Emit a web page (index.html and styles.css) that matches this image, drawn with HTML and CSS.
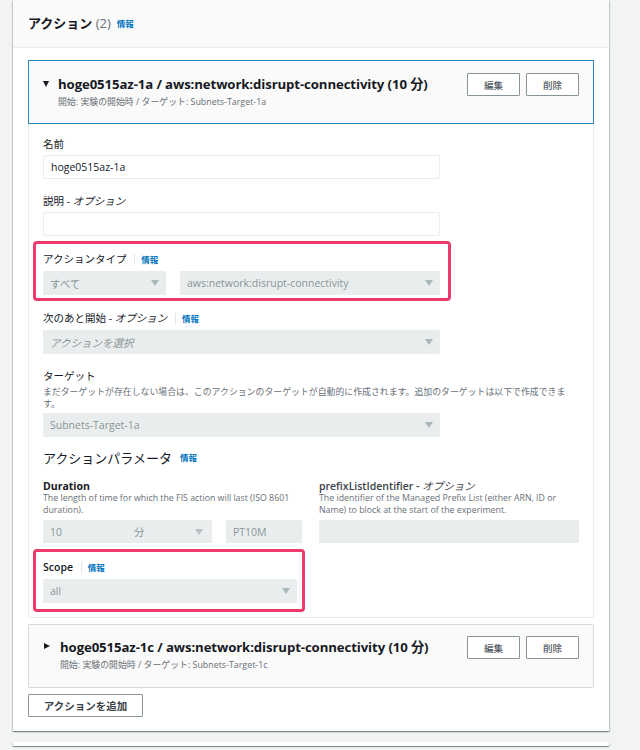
FILE: index.html
```html
<!DOCTYPE html>
<html lang="ja">
<head>
  <meta charset="UTF-8">
  <meta name="viewport" content="width=device-width, initial-scale=1.0">
  <title>アクション · FIS</title>
  <link rel="stylesheet" href="styles.css">
</head>
<body>
  <div class="panel">
    <div class="panel-head">
      <h2>アクション <span class="count">(2)</span></h2>
      <a class="info" href="#">情報</a>
    </div>

    <div class="panel-body">
      <!-- Action 1 (expanded) -->
      <div class="action open">
        <div class="action-head">
          <span class="tri down"></span>
          <div class="action-title">
            <h3>hoge0515az-1a / aws:network:disrupt-connectivity (10 分)</h3>
            <p>開始: 実験の開始時 / ターゲット: Subnets-Target-1a</p>
          </div>
          <div class="btns">
            <button class="btn">編集</button>
            <button class="btn">削除</button>
          </div>
        </div>

        <div class="action-body">
          <div class="field">
            <label>名前</label>
            <div class="input">hoge0515az-1a</div>
          </div>

          <div class="field">
            <label>説明 - <i>オプション</i></label>
            <div class="input"></div>
          </div>

          <div class="hl hl-type">
            <label>アクションタイプ <a class="info sep" href="#">情報</a></label>
            <div class="row">
              <div class="select w-cat">すべて<span class="caret"></span></div>
              <div class="select w-type">aws:network:disrupt-connectivity<span class="caret"></span></div>
            </div>
          </div>

          <div class="field after-hl">
            <label>次のあと開始 - <i>オプション</i> <a class="info sep" href="#">情報</a></label>
            <div class="select placeholder">アクションを選択<span class="caret"></span></div>
          </div>

          <div class="field wide">
            <label>ターゲット</label>
            <p class="desc">まだターゲットが存在しない場合は、このアクションのターゲットが自動的に作成されます。追加のターゲットは以下で作成できます。</p>
            <div class="select">Subnets-Target-1a<span class="caret"></span></div>
          </div>

          <h4 class="params-title">アクションパラメータ <a class="info" href="#">情報</a></h4>

          <div class="params">
            <div class="param">
              <label>Duration</label>
              <p class="desc">The length of time for which the FIS action will last (ISO 8601 duration).</p>
              <div class="row">
                <div class="duration">
                  <span class="num">10</span>
                  <span class="unit">分</span>
                  <span class="caret"></span>
                </div>
                <div class="select iso">PT10M</div>
              </div>
            </div>
            <div class="param">
              <label>prefixListIdentifier - <i>オプション</i></label>
              <p class="desc">The identifier of the Managed Prefix List (either ARN, ID or Name) to block at the start of the experiment.</p>
              <div class="select"></div>
            </div>
          </div>

          <div class="hl hl-scope">
            <label class="strong">Scope <a class="info sep" href="#">情報</a></label>
            <div class="select">all<span class="caret"></span></div>
          </div>
        </div>
      </div>

      <!-- Action 2 (collapsed) -->
      <div class="action">
        <div class="action-head">
          <span class="tri right"></span>
          <div class="action-title">
            <h3>hoge0515az-1c / aws:network:disrupt-connectivity (10 分)</h3>
            <p>開始: 実験の開始時 / ターゲット: Subnets-Target-1c</p>
          </div>
          <div class="btns">
            <button class="btn">編集</button>
            <button class="btn">削除</button>
          </div>
        </div>
      </div>

      <button class="btn add">アクションを追加</button>
    </div>
  </div>

  <div class="panel next"></div>
</body>
</html>
```

FILE: styles.css
```css
:root {
  --bg: #f2f3f3;
  --panel: #ffffff;
  --head: #fafafa;
  --text: #16191f;
  --muted: #687078;
  --disabled: #eaeded;
  --disabled-text: #879596;
  --link: #0073bb;
  --line: #d5dbdb;
  --pink: #ec3a6d;
}
* { margin: 0; padding: 0; box-sizing: border-box; }
body {
  background: var(--bg);
  color: var(--text);
  font-family: "Open Sans", "Noto Sans CJK JP", sans-serif;
  padding-left: 13px;
  width: 640px;
  height: 750px;
  overflow: hidden;
}
i { font-style: italic; font-weight: 400; }

/* ===== Panel ===== */
.panel {
  width: 596px;
  background: var(--panel);
  box-shadow: 0 1px 1px 0 rgba(0,28,36,0.3), 1px 1px 1px 0 rgba(0,28,36,0.15), -1px 1px 1px 0 rgba(0,28,36,0.15);
}
.panel.next { margin-top: 11px; height: 4px; }
.panel-head {
  height: 48px;
  background: var(--head);
  border-bottom: 1px solid #eaeded;
  display: flex;
  align-items: center;
  padding: 0 15px 2px;
  gap: 6px;
}
.panel-head h2 { font-size: 13px; font-weight: 700; line-height: 20px; }
.panel-head .count { font-weight: 400; color: var(--muted); }
.panel-body {
  padding: 12px 15px 14px;
  display: flex;
  flex-direction: column;
  gap: 6px;
}

.info {
  color: var(--link);
  font-size: 8.5px;
  font-weight: 700;
  text-decoration: none;
  font-style: normal;
}
.info.sep {
  margin-left: 5px;
  padding-left: 6px;
  border-left: 1px solid #e3e6e6;
}

/* ===== Action card ===== */
.action {
  background: var(--head);
  border: 1px solid var(--line);
  border-radius: 1px;
}
.action.open { background: none; border: none; }
.action.open .action-head { border: 1px solid #2c84bd; background: var(--head); }
.action-head {
  height: 64px;
  display: flex;
  align-items: flex-start;
  padding: 13px 14px 0 14px;
}
.action:not(.open) .action-head { height: 62px; padding-top: 12px; }
.tri {
  width: 0; height: 0;
  margin-top: 7px;
  margin-right: 9px;
  flex-shrink: 0;
}
.tri.down {
  border-left: 3.5px solid transparent;
  border-right: 3.5px solid transparent;
  border-top: 6px solid var(--text);
}
.tri.right {
  margin-top: 6px;
  margin-left: 1px;
  margin-right: 10px;
  border-top: 3.5px solid transparent;
  border-bottom: 3.5px solid transparent;
  border-left: 6px solid var(--text);
}
.action-title { flex: 1; }
.action-title h3 { font-size: 13.2px; font-weight: 700; line-height: 20px; letter-spacing: -0.1px; }
.action-title p { font-size: 8.9px; color: var(--muted); line-height: 12px; margin-top: 2px; }
.btns { display: flex; gap: 6px; margin-top: -1px; }
.btn {
  height: 23px;
  width: 53px;
  background: #fff;
  border: 1px solid #879596;
  border-radius: 1px;
  color: #545b64;
  font-family: inherit;
  font-size: 9.5px;
  font-weight: 500;
}
.btn.add { width: 115px; align-self: flex-start; font-size: 10.5px; font-weight: 700; color: #3b4148; }

.action-body {
  background: #fff;
  border: 1px solid #eaeded;
  border-top: none;
  padding: 12px 14px 5px 14px;
}

/* ===== Form fields ===== */
label {
  display: block;
  font-size: 10.5px;
  line-height: 16px;
  margin-bottom: 3px;
  color: var(--text);
}
label.strong { font-weight: 600; }
.field { width: 397px; margin-bottom: 14px; }
.field.wide { width: 530px; }
.field.wide .select { width: 397px; }
.field + .hl { margin-top: -9px; }
.after-hl { margin-top: 9px; }
.input, .select {
  height: 24px;
  display: flex;
  align-items: center;
  padding: 0 7px;
  font-size: 10.5px;
  position: relative;
}
.input {
  background: #fff;
  border: 1px solid #eaeded;
  border-radius: 2px;
}
.select {
  background: var(--disabled);
  color: var(--disabled-text);
  border-radius: 1px;
}
.select.placeholder { font-style: italic; }
.caret {
  margin-left: auto;
  width: 0; height: 0;
  border-left: 4px solid transparent;
  border-right: 4px solid transparent;
  border-top: 6px solid #aab7b8;
}
.desc {
  font-size: 8.9px;
  line-height: 12px;
  color: var(--muted);
  margin-top: -1px;
  margin-bottom: 3px;
}
.row { display: flex; gap: 14px; }

/* highlighted boxes */
.hl {
  border: 3px solid var(--pink);
  border-radius: 4px;
  margin-left: -10px;
  padding: 7px 8px 3px 7px;
}
.hl-type { width: 418px; }
.w-cat { width: 123px; }
.w-type { flex: 1; }
.hl-scope {
  width: 272px;
  margin-top: 6px;
  padding: 7px 5px 6px 7px;
}

/* params */
.params-title {
  font-size: 13px;
  font-weight: 400;
  line-height: 20px;
  margin-top: -3px;
  margin-bottom: 10px;
  display: flex;
  align-items: center;
  gap: 8px;
}
.params { display: flex; gap: 16px; }
.param { width: 260px; }
.param label { font-weight: 700; margin-bottom: 0; }
.param:nth-child(2) label { font-weight: 600; color: #3b4148; }
.param .desc { font-size: 8.8px; line-height: 11.5px; margin-bottom: 4px; }
.param .select, .duration { height: 23px; }
.duration {
  width: 169px;
  background: var(--disabled);
  color: var(--disabled-text);
  display: flex;
  align-items: center;
  padding: 0 9px 0 7px;
  font-size: 10.5px;
}
.duration .unit { margin-left: 72px; }
.duration .caret { border-top-color: #b5c0c1; }
.iso { width: 76px; flex-shrink: 0; }
```
